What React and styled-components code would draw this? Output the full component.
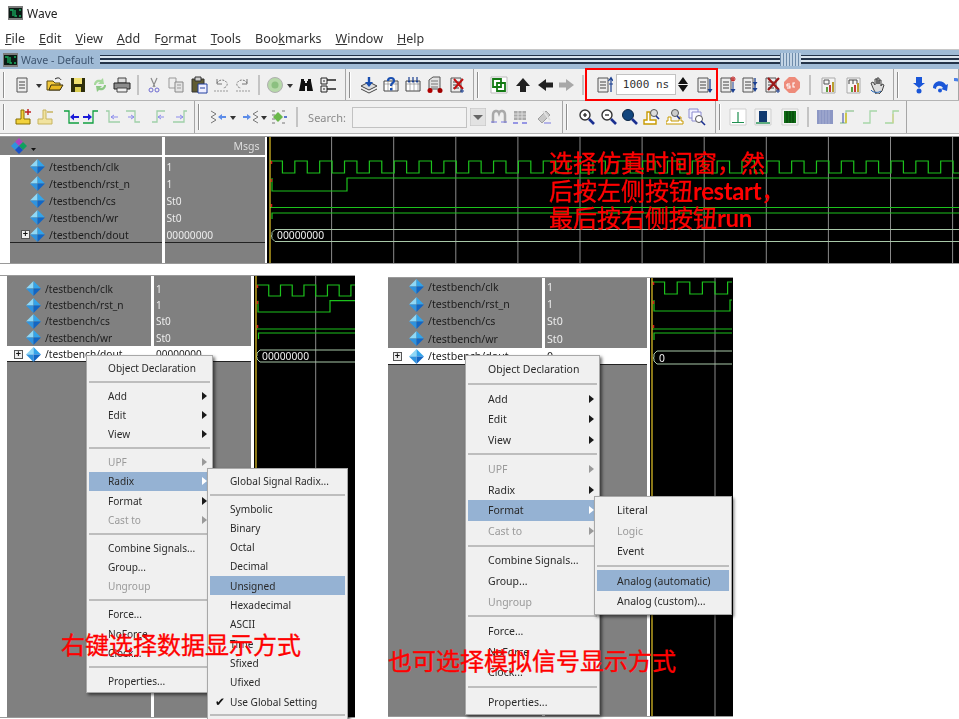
import React from 'react';
import styled, { createGlobalStyle } from 'styled-components';

const Global = createGlobalStyle`
  html, body { margin: 0; padding: 0; background: #fff; }
  * { box-sizing: border-box; }
`;

const uiFont = `"Noto Sans", "Open Sans", sans-serif`;

const Page = styled.div`
  position: relative;
  width: 959px;
  height: 719px;
  overflow: hidden;
  background: #fff;
  font-family: ${uiFont};
  color: #222;
`;
const Soft = styled.div`
  filter: blur(0.35px);
`;
const TitleBar = styled.div`
  height: 26px;
  padding-left: 8px;
  display: flex;
  align-items: center;
  gap: 4px;
  font-size: 12px;
`;
const MenuBar = styled.div`
  height: 23px;
  padding: 1px 0 0 5px;
  display: flex;
  align-items: center;
  gap: 14px;
  font-size: 12.5px;
  color: #333;
  u { text-underline-offset: 1px; }
`;
const WaveWindow = styled.div`
  position: relative;
`;
const DockHeader = styled.div`
  height: 20px;
  display: flex;
  align-items: center;
  padding-left: 3px;
  gap: 3px;
  background: #a0bbd6;
  border-top: 1px solid #c8c8c8;
  font-size: 10.7px;
  color: #3e5570;
`;
const DockLines = styled.div`
  position: relative;
  flex: 1;
  height: 9px;
  margin-left: 3px;
  background: repeating-linear-gradient(to bottom, #24344a 0 1px, #dbe6f0 1px 3px, #24344a 3px 4px);
`;
const DockGrip = styled.div`
  position: absolute;
  left: 680px;
  top: -2px;
  width: 21px;
  height: 13px;
  background: repeating-linear-gradient(to right, #6f8cab 0 1px, #c4d5e6 1px 3px);
`;
const ToolRow = styled.div`
  display: flex;
  height: ${p => p.$h}px;
  background: #f0f0f0;
  border-bottom: 1px solid #b4b4b4;
`;
const ToolGroup = styled.div`
  display: flex;
  flex: 0 0 ${p => p.$w}px;
  align-items: center;
  overflow: hidden;
  border-right: 1px solid #a6a6a6;
  font-size: 11px;
`;
const Grip = styled.i`
  flex: 0 0 2px;
  height: 26px;
  margin-left: 3px;
  border-left: 1px solid #8e8e8e;
  border-right: 1px solid #fff;
`;
const Tool = styled.span`
  flex: 0 0 ${p => p.$w}px;
  min-width: 0;
  margin-left: ${p => p.$gap}px;
  display: flex;
  justify-content: center;
  align-items: center;
  svg { flex: none; display: block; }
`;
const Divider = styled.i`
  display: block;
  width: 2px;
  height: 20px;
  background: #c4c4c4;
`;
const Field = styled.div`
  width: 100%;
  height: 21px;
  background: ${p => (p.$dim ? '#f2f2f2' : '#fff')};
  border: 1px solid #c2c2c2;
`;
const TimeField = styled(Field)`
  display: flex;
  align-items: center;
  justify-content: center;
  font: 11px "DejaVu Sans Mono", "Liberation Mono", monospace;
  color: #333;
  white-space: pre;
`;
const Spin = styled.div`
  display: flex;
  flex-direction: column;
  gap: 1px;
  align-items: center;
`;
const SearchLabel = styled.span`
  color: #8a8a8a;
  font-size: 11px;
`;
const Marker = styled.div`
  position: absolute;
  left: 585px;
  top: 19px;
  width: 133px;
  height: 33px;
  border: 2px solid #f00;
`;
const Gap = styled.div`
  height: 2px;
  background: #fff;
`;
const Panes = styled.div`
  display: grid;
  grid-template-columns: ${p => p.$cols};
  column-gap: ${p => p.$gap}px;
  width: 100%;
  border-top: 1px solid #9a9a9a;
  border-bottom: 1px solid #9a9a9a;
  background: #fff;
`;
const HeaderCell = styled.div`
  height: 18px;
  background: #808080;
  margin-bottom: 2px;
  display: flex;
  align-items: center;
  justify-content: flex-end;
  padding-right: 5px;
  font-size: 10.5px;
  color: #dcdcdc;
`;
const HeaderIconCell = styled(HeaderCell)`
  justify-content: flex-start;
  padding-left: 11px;
  gap: 3px;
`;
const Col = styled.div`
  display: flex;
  flex-direction: column;
  height: ${p => p.$h}px;
`;
const Body = styled.div`
  flex: 1;
  background: #808080;
  margin-left: ${p => p.$inset || 0}px;
  padding-top: ${p => p.$top}px;
`;
const SigRow = styled.div`
  position: relative;
  height: ${p => p.$h}px;
  display: flex;
  align-items: center;
  gap: 4px;
  padding-left: ${p => p.$pad}px;
  font-size: ${p => p.$fs}px;
  white-space: nowrap;
  color: ${p => (p.$value && !p.$sel ? '#ececec' : '#1c1c1c')};
  background: ${p => (p.$sel ? '#fff' : 'transparent')};
  box-shadow: ${p => (p.$rule ? 'inset 0 -1px 0 #222' : 'none')};
`;
const Plus = styled.span`
  position: absolute;
  left: ${p => p.$x}px;
  top: 50%;
  width: 9px;
  height: 9px;
  margin-top: -4.5px;
  border: 1px solid #555;
  background: #eee;
  font: bold 9px/7px "Liberation Sans", sans-serif;
  text-align: center;
  color: #111;
`;
const WaveBox = styled.div`
  background: #000;
  height: 100%;
  overflow: hidden;
  svg { display: block; }
`;
const Shots = styled.div`
  display: flex;
  align-items: flex-start;
  padding-top: 11px;
`;
const Shot = styled.div`
  position: relative;
  flex: 0 0 ${p => p.$w}px;
  height: ${p => p.$h}px;
  margin-left: ${p => p.$ml || 0}px;
  margin-top: ${p => p.$mt || 0}px;
`;
const Menu = styled.div`
  position: absolute;
  left: ${p => p.$x}px;
  top: ${p => p.$y}px;
  width: ${p => p.$w}px;
  padding: ${p => p.$pad}px 2px 2px;
  background: #f0f0f0;
  border: 1px solid #a8a8a8;
  box-shadow: 2px 2px 3px rgba(0, 0, 0, 0.55);
  font-size: ${p => p.$fs}px;
`;
const Item = styled.div`
  position: relative;
  height: ${p => p.$h}px;
  display: flex;
  align-items: center;
  padding-left: ${p => p.$pad}px;
  white-space: nowrap;
  color: ${p => (p.$off ? '#9a9a9a' : '#2a2a2a')};
  background: ${p => (p.$hot ? '#95b2d3' : 'transparent')};
`;
const Arrow = styled.i`
  position: absolute;
  right: 3px;
  top: 50%;
  margin-top: -4px;
  border-left: 5px solid ${p => (p.$off ? '#9a9a9a' : p.$hot ? '#fff' : '#1a1a1a')};
  border-top: 4px solid transparent;
  border-bottom: 4px solid transparent;
`;
const Check = styled.span`
  position: absolute;
  left: 5px;
  font-size: 12px;
  color: #111;
`;
const MenuSep = styled.div`
  height: ${p => p.$h}px;
  display: flex;
  align-items: center;
  &::after {
    content: '';
    flex: 1;
    height: 2px;
    background: #bdbdbd;
  }
`;
const Note = styled.div`
  position: absolute;
  left: ${p => p.$x}px;
  top: ${p => p.$y}px;
  font: 400 24px/27.5px Lato, "Noto Sans CJK SC", sans-serif;
  color: #f00;
  white-space: nowrap;
  -webkit-text-stroke: 0.35px #f00;
  b { font-weight: 700; letter-spacing: -0.4px; -webkit-text-stroke: 0; }
`;

/* ---------- drawn icons ---------- */
const S = ({ children, size = 18, vb = 18 }) => (
  <svg width={size} height={size} viewBox={`0 0 ${vb} ${vb}`} fill="none">{children}</svg>
);
const doc = (
  <path d="M3 2h10v14H3z" fill="#ececec" stroke="#555" />
);
const textLines = <path d="M5 6h6M5 9h6M5 12h6" stroke="#444" />;
const gridBox = <><path d="M2 5h14v10H2z" fill="#fff" stroke="#444" /><path d="M2 8h14M6 5v10M10 5v10M14 5v10" stroke="#7c7c7c" strokeWidth=".6" /></>;
const stepLine = (d, c) => <path d={d} stroke={c} strokeWidth="1.3" fill="none" />;
const icons = {
  page: <>{doc}{textLines}</>,
  open: <><path d="M1 14V5h6l2 2h5v7z" fill="#f2c93c" stroke="#5a4a10" /><path d="M3 14l2-5h12l-3 5z" fill="#e8b820" stroke="#3a3010" /><path d="M9 3c3-2 5-1 6 1" stroke="#222" /></>,
  save: <><path d="M2 2h14v14H2z" fill="#2e2e0c" /><path d="M5 2h8v6H5z" fill="#f0e070" /><path d="M6 11h6v5H6z" fill="#d8cc50" /></>,
  refresh: <><path d="M3 9c0-4 3-6 7-5l2-2 1 6-6 0 2-2c-2-.5-4 1-4 3z" fill="#a6d89c" /><path d="M15 9c0 4-3 6-7 5l-2 2-1-6 6 0-2 2c2 .5 4-1 4-3z" fill="#8cc884" /></>,
  print: <><path d="M5 2h8v5H5z" fill="#ddd" stroke="#444" /><path d="M1 7h16v6H1z" fill="#8c8c8c" stroke="#222" /><path d="M4 12h10v4H4z" fill="#eee" stroke="#444" /></>,
  cut: <><path d="M6 2l4 9M12 2L8 11" stroke="#8b8b8b" strokeWidth="1.2" /><circle cx="6" cy="14" r="2" stroke="#6d6ad0" /><circle cx="12" cy="14" r="2" stroke="#6d6ad0" /></>,
  copy: <><path d="M2 2h7v10H2z" fill="#eee" stroke="#999" /><path d="M8 6h8v10H8z" fill="#e4e4e4" stroke="#888" /><path d="M10 9h4M10 12h4" stroke="#999" /></>,
  paste: <><path d="M2 3h12v13H2z" fill="#5f5b33" stroke="#333" /><path d="M5 1h6v4H5z" fill="#ccc" stroke="#333" /><path d="M8 8h9v9H8z" fill="#eef" stroke="#2340a0" /><path d="M10 12h5" stroke="#2340a0" /></>,
  undo: <><path d="M5 7c2-4 8-4 10 0 1 3-2 5-4 5" stroke="#777" strokeDasharray="2 1.2" /><path d="M5 3v5h5" stroke="#777" /><path d="M2 15h14" stroke="#999" strokeDasharray="2 1" /></>,
  redo: <><path d="M13 7c-2-4-8-4-10 0-1 3 2 5 4 5" stroke="#777" strokeDasharray="2 1.2" /><path d="M13 3v5H8" stroke="#777" /><path d="M2 15h14" stroke="#999" strokeDasharray="2 1" /></>,
  badge: <><circle cx="9" cy="9" r="7.5" fill="#b5d8a8" stroke="#b0b0b0" /><circle cx="9" cy="9" r="3.5" fill="#8cc080" /></>,
  drop: <path d="M6 8h6l-3 4z" fill="#333" />,
  binoc: <><path d="M2 15l2-10h4v10zM16 15l-2-10h-4v10z" fill="#111" /><path d="M4 3h3v3H4zM11 3h3v3h-3zM8 7h2v3H8z" fill="#111" /></>,
  tree: <><path d="M2 2h6v6H2zM2 10h6v6H2z" fill="#eee" stroke="#222" /><path d="M8 4h9M8 13h9" stroke="#222" strokeWidth="1.4" /><path d="M4 5h2M4 13h2" stroke="#222" /></>,
  stack: <><path d="M1 10l8-4 8 4-8 4z" fill="#ddd" stroke="#444" /><path d="M1 13l8 4 8-4" stroke="#444" /><path d="M9 1v7" stroke="#1a4fb0" strokeWidth="2.4" /><path d="M5 6h8l-4 5z" fill="#1a4fb0" /></>,
  helpGrid: <>{gridBox}<path d="M6 5c0-4 6-4 6 0 0 2-3 2-3 5" stroke="#1a4fb0" strokeWidth="2.2" /><path d="M8 12h2.4v2.4H8z" fill="#1a4fb0" /></>,
  arrowsGrid: <>{gridBox}<path d="M5 1v5M9 1v5M13 1v5" stroke="#1a3f90" strokeWidth="1.2" /><path d="M3.5 5h3L5 7zM7.500 5h3L9 7zM11.500 5h3L13 7z" fill="#1a3f90" /></>,
  cart: <><path d="M3 13V4l4-3h7v12z" fill="#e2e2e2" stroke="#555" /><path d="M5 5h7M5 8h7M5 11h7" stroke="#777" /><circle cx="4" cy="14.500" r="2.500" fill="#b00000" /><circle cx="14" cy="14.500" r="2.500" fill="#a00000" /></>,
  xDoc: <>{doc}{textLines}<path d="M6 3l9 10M15 3L6 13" stroke="#c01010" strokeWidth="2" /><path d="M14 13v4M12 15h4" stroke="#1a3f90" /></>,
  newWin: <><path d="M1 1h16v16H1z" fill="#fff" stroke="#bbb" /><path d="M3 3h8v8H3zM7 7h8v8H7z" stroke="#137a13" strokeWidth="1.8" /></>,
  up: <path d="M9 2l7 8h-4v6H6v-6H2z" fill="#222" />,
  left: <path d="M2 9l8-6v3.500h7v5h-7V15z" fill="#222" />,
  right: <path d="M16 9l-8-6v3.500H1v5h7V15z" fill="#a8a8a8" />,
  restart: <>{doc}{textLines}<path d="M16 2v14M13.500 5L16 1.500 18 5" stroke="#1a3f90" strokeWidth="1.2" /><path d="M14 8h4" stroke="#1a3f90" /></>,
  run: <>{doc}{textLines}<path d="M15 3v13" stroke="#1a3f90" strokeWidth="1.3" /><path d="M12.500 13h5L15 17z" fill="#1a3f90" /></>,
  contRun: <>{doc}{textLines}<path d="M15 2v3" stroke="#c02020" strokeWidth="1.6" /><circle cx="15" cy="3" r="2" stroke="#c02020" /><path d="M15 6v9" stroke="#1a3f90" /><path d="M12.500 13h5L15 17z" fill="#1a3f90" /></>,
  runAll: <>{doc}{textLines}<path d="M15 2v11" stroke="#1a3f90" strokeWidth="1.3" /><path d="M12.500 6h5L15 9.500zM12.500 12h5L15 16z" fill="#1a3f90" /></>,
  breakRun: <>{doc}{textLines}<path d="M5 2l11 12M16 2L5 14" stroke="#9c1818" strokeWidth="2.2" /><path d="M15 13v4" stroke="#1a3f90" /><path d="M13 15h4" stroke="#1a3f90" /></>,
  stop: <><path d="M6 1h6l5 5v6l-5 5H6l-5-5V6z" fill="#ee8b7a" /><path d="M4 8h3M4 8v2h3v2H4M12 7h-2v4h2" stroke="#fff" strokeWidth="1.100" /></>,
  chartA: <><path d="M2 2h13v15H2z" fill="#f4f4f4" stroke="#aaa" /><path d="M4 4h5v4H4z" stroke="#555" /><path d="M9 9h2v7H9z" fill="#c83a3a" /><path d="M12 6h2v10h-2z" fill="#b8a030" /><path d="M6 11h2v5H6z" fill="#5f9f3f" /></>,
  chartB: <><path d="M2 2h13v15H2z" fill="#f4f4f4" stroke="#aaa" /><path d="M4 4h8M4 4v4M8 4v4M12 4v4" stroke="#444" /><path d="M6 11h2v5H6z" fill="#5f9f3f" /><path d="M9 9h2v7H9z" fill="#c83a3a" /><path d="M12 7h2v9h-2z" fill="#b8a030" /></>,
  hand: <><path d="M5 12L3 7l2-1 2 3V3h2v5V2h2v6-4h2v6l1-2 2 1-2 6-3 3H8z" fill="#ddd" stroke="#444" /><path d="M3 14c2 3 8 3 10 1" stroke="#2060b0" /></>,
  downBlue: <><path d="M6 1h6v6h3l-6 5-6-5h3z" fill="#1a56d8" /><circle cx="9" cy="15" r="2.500" fill="#1a56d8" /></>,
  overBlue: <><path d="M2 12c0-8 10-9 13-3l2-1-1 7-6-2 2-1c-2-3-7-3-7 1z" fill="#1a56d8" /><circle cx="9" cy="14.500" r="2" fill="#1a56d8" /></>,
  intoBlue: <path d="M3 2c6 0 9 2 9 6h3l-4 5-4-5h2c0-2-2-3-6-3z" fill="#4a80e8" />,
  curAdd: <><path d="M7 2h3v9h6v5H2v-5h5z" fill="#f2d23c" stroke="#8a7000" /><path d="M11 4h6M14 1v6" stroke="#c02020" strokeWidth="1.500" /></>,
  curDel: <><path d="M7 2h3v9h6v5H2v-5h5z" fill="#f1e3a0" stroke="#c8b560" /><path d="M11 4h6" stroke="#c8b560" strokeWidth="1.500" /></>,
  stepL: <>{stepLine('M1 3h5v12h10', '#10a040')}<path d="M7 9l4-3.500v2.500h5v2h-5v2.500z" fill="#1a1ad8" /></>,
  stepR: <>{stepLine('M2 15h10V3h5', '#10a040')}<path d="M11 9L7 5.500v2.500H2v2h5v2.500z" fill="#1a1ad8" /></>,
  palA: <>{stepLine('M2 3h3v11h11', '#9fd0a8')}<path d="M7 9h7M7 9l3-2M7 9l3 2" stroke="#8c8cec" /></>,
  palB: <>{stepLine('M2 3h9v11h5', '#9fd0a8')}<path d="M4 9h6M10 9L7 7M10 9l-3 2" stroke="#8c8cec" /></>,
  palC: <>{stepLine('M15 3H7v11H2', '#9fd0a8')}<path d="M8 9h6M8 9l3-2M8 9l3 2" stroke="#8c8cec" /></>,
  palD: <>{stepLine('M16 3h-3v11H2', '#9fd0a8')}<path d="M5 9h7M12 9L9 7M12 9l-3 2" stroke="#8c8cec" /></>,
  mergeL: <><path d="M2 3l5 3-5 3 5 3-5 3" stroke="#777" /><path d="M9 9l4-3v2h4v2h-4v2z" fill="#5c8ce8" /></>,
  mergeR: <><path d="M16 3l-5 3 5 3-5 3 5 3" stroke="#777" /><path d="M9 9L5 6v2H1v2h4v2z" fill="#5c8ce8" /></>,
  bus: <><path d="M2 3h3M2 7h3M2 11h3M2 15h3M12 3h3M12 15h3" stroke="#777" /><path d="M8 4l5 5-5 5-5-5z" fill="#6ab84a" /><path d="M14 9h3" stroke="#2a50c0" strokeWidth="1.500" /></>,
  fadeA: <><path d="M3 15V7c0-5 5-5 6-2 1-3 6-3 6 2v8" stroke="#a9a9a9" strokeWidth="2.500" /><path d="M1 14h6M11 14h6" stroke="#7878e0" /></>,
  fadeB: <><path d="M3 3h12v9H3z" fill="#aaa" /><path d="M3 6h12M3 9h12M7 3v9M11 3v9" stroke="#ddd" /><path d="M2 15h5M11 15h5" stroke="#7878e0" strokeWidth="1.500" /></>,
  fadeC: <><path d="M3 11L11 3l4 4-8 8z" fill="#c8c8c8" stroke="#a0a0a0" /><path d="M8 3l7 9" stroke="#e0e0e0" strokeWidth="2" /><path d="M9 15h7" stroke="#7878e0" /></>,
  zoomIn: <><circle cx="7" cy="7" r="5" fill="#fff" stroke="#333" strokeWidth="1.400" /><path d="M5 7h4M7 5v4" stroke="#111" strokeWidth="1.200" /><path d="M11 11l5 5" stroke="#1a2f90" strokeWidth="2.600" /></>,
  zoomOut: <><circle cx="7" cy="7" r="5" fill="#fff" stroke="#333" strokeWidth="1.400" /><path d="M5 7h4" stroke="#111" strokeWidth="1.200" /><path d="M11 11l5 5" stroke="#1a2f90" strokeWidth="2.600" /></>,
  zoomFull: <><circle cx="7" cy="7" r="5.500" fill="#12467e" stroke="#0a2240" /><path d="M11 11l5 5" stroke="#1a2f90" strokeWidth="2.600" /></>,
  zoomCur: <><path d="M4 4v8H1v4h12v-4H7V4z" fill="#fff" stroke="#c89a00" strokeWidth="1.400" /><circle cx="11" cy="5" r="3.500" fill="#ddd" stroke="#555" /><path d="M13 8l3 3" stroke="#1a2f90" strokeWidth="1.600" /></>,
  zoomTwo: <><path d="M2 9v4H0v3h17v-3h-2V9h-2v4H5V9z" fill="#fff" stroke="#c89a00" /><circle cx="9" cy="5" r="3.500" fill="#ccc" stroke="#555" /><path d="M11 8l3 3" stroke="#1a2f90" strokeWidth="1.600" /></>,
  zoomDocs: <><path d="M1 1h9v9H1z" fill="#f2f2ff" stroke="#8a8ad0" /><path d="M4 4h9v9H4z" fill="#fafaff" stroke="#8a8ad0" /><circle cx="11" cy="11" r="3.500" fill="#fff" stroke="#555" /><path d="M13 13l4 4" stroke="#1a2f90" strokeWidth="1.600" /></>,
  waveOne: <><path d="M1 1h16v16H1z" fill="#fff" stroke="#cfcfcf" /><path d="M9 4v10M3 14.500h12" stroke="#1f9050" strokeWidth="1.200" /></>,
  waveDark: <><path d="M1 1h16v16H1z" fill="#f4f4f4" stroke="#cfcfcf" /><path d="M5 3h8v11H5z" fill="#123a70" /><path d="M2 15h14" stroke="#1f9050" strokeWidth="1.400" /></>,
  waveGreen: <><path d="M1 1h16v16H1z" fill="#f4f4f4" stroke="#cfcfcf" /><path d="M3 3h12v12H3z" fill="#0e6a14" /><path d="M6 3v12M9 3v12M12 3v12" stroke="#053a08" /></>,
  hatch: <><path d="M1 2h16v14H1z" fill="#8c97c4" /><path d="M4 2v14M7 2v14M10 2v14M13 2v14" stroke="#a9b1d4" /></>,
  stepY: <>{stepLine('M2 15h6V3h8', '#9fcaa0')}<path d="M8 5v10" stroke="#d4c430" strokeWidth="1.600" /><path d="M5 5v10" stroke="#5060b0" strokeWidth="1.200" /></>,
  stepG: <>{stepLine('M2 15h7V3h7', '#a6d6a8')}</>,
  stepK: <>{stepLine('M2 15h8V3h6', '#a6d6a0')}<path d="M10 6v9" stroke="#d8d080" /></>,
};

const Diamond = ({ size = 15 }) => (
  <svg width={size} height={size} viewBox="0 0 16 16" style={{ flex: 'none' }}>
    <polygon points="8,0 8,8 0,8" fill="#8fd8f6" />
    <polygon points="8,0 16,8 8,8" fill="#33a4ea" />
    <polygon points="0,8 8,8 8,16" fill="#2f93de" />
    <polygon points="8,8 16,8 8,16" fill="#1266c4" />
  </svg>
);
const AppGlyph = ({ w = 15, h = 14 }) => (
  <svg width={w} height={h} viewBox="0 0 15 14" style={{ flex: 'none' }}>
    <rect width="15" height="14" fill="#7c7c7c" />
    <rect x="1" y="2" width="13" height="10" fill="#0a1a14" />
    <path d="M2 4h3v6M7 4v6h2M11 4h2M11 10h2" stroke="#18b060" strokeWidth="1.300" fill="none" />
  </svg>
);
const GroupGlyph = () => (
  <>
    <svg width="17" height="16" viewBox="0 0 17 16" style={{ flex: 'none' }}>
      <polygon points="8,0 12,4 8,8 4,4" fill="#b040c0" />
      <polygon points="4,4 8,8 4,12 0,8" fill="#2f93de" />
      <polygon points="12,4 16,8 12,12 8,8" fill="#10a060" />
      <polygon points="8,8 12,12 8,16 4,12" fill="#1a50c8" />
    </svg>
    <svg width="5" height="3" viewBox="0 0 5 3" style={{ marginTop: 6 }}><path d="M0 0h5L2.500 3z" fill="#111" /></svg>
  </>
);

const custom = {
  sep: () => <Divider />,
  time: () => <TimeField>1000 ns</TimeField>,
  spin: () => (
    <Spin>
      <svg width="10" height="7"><path d="M5 0l5 7H0z" fill="#111" /></svg>
      <svg width="10" height="7"><path d="M5 7l5-7H0z" fill="#111" /></svg>
    </Spin>
  ),
  searchLabel: () => <SearchLabel>Search:</SearchLabel>,
  searchField: () => <Field $dim />,
  searchDrop: () => (
    <svg width="16" height="18"><rect width="16" height="18" fill="#e2e2e2" stroke="#c0c0c0" /><path d="M3 7h10l-5 5z" fill="#666" /></svg>
  ),
};
const widthOf = { sep: 2, drop: 8, time: 60, spin: 12, searchLabel: 40, searchField: 115, searchDrop: 16 };

const Tools = ({ start, items }) => {
  let x = start;
  return items.map(([name, cx], i) => {
    const w = widthOf[name] || 18;
    const gap = cx - w / 2 - x;
    x = cx + w / 2;
    const Custom = custom[name];
    return (
      <Tool key={i} $w={w} $gap={gap}>
        {Custom ? <Custom /> : <S>{icons[name]}</S>}
      </Tool>
    );
  });
};

const Bar = ({ groups, h }) => {
  let x = 0;
  return (
    <ToolRow $h={h}>
      {groups.map((g, i) => {
        const start = x + 5;
        x += g.w;
        return (
          <ToolGroup key={i} $w={g.w}>
            <Grip />
            <Tools start={start} items={g.items} />
          </ToolGroup>
        );
      })}
    </ToolRow>
  );
};

const row1 = [
  { w: 346, items: [['page', 23], ['drop', 39], ['open', 55], ['save', 78], ['refresh', 100], ['print', 122], ['sep', 138], ['cut', 154], ['copy', 176], ['paste', 199], ['undo', 221], ['redo', 243], ['sep', 259], ['badge', 275], ['drop', 290], ['binoc', 306], ['tree', 328]] },
  { w: 128, items: [['stack', 369], ['helpGrid', 391], ['arrowsGrid', 413], ['cart', 435], ['xDoc', 457]] },
  { w: 420, items: [['newWin', 499], ['up', 523], ['left', 545], ['right', 567], ['sep', 583], ['restart', 604], ['time', 646], ['spin', 683], ['run', 704], ['contRun', 727], ['runAll', 749], ['breakRun', 772], ['stop', 792], ['sep', 810], ['chartA', 829], ['chartB', 854], ['hand', 877]] },
  { w: 65, items: [['downBlue', 919], ['overBlue', 940], ['intoBlue', 960]] },
];
const row2 = [
  { w: 195, items: [['curAdd', 23], ['curDel', 45], ['stepL', 72], ['stepR', 90], ['palA', 113], ['palB', 133], ['palC', 159], ['palD', 180]] },
  { w: 368, items: [['mergeL', 218], ['drop', 233], ['mergeR', 251], ['drop', 264], ['bus', 279], ['sep', 297], ['searchLabel', 327], ['searchField', 409], ['searchDrop', 478], ['fadeA', 499], ['fadeB', 520], ['fadeC', 544]] },
  { w: 153, items: [['zoomIn', 587], ['zoomOut', 609], ['zoomFull', 630], ['zoomCur', 652], ['zoomTwo', 675], ['zoomDocs', 697]] },
  { w: 191, items: [['waveOne', 738], ['waveDark', 763], ['waveGreen', 790], ['sep', 808], ['hatch', 825], ['stepY', 847], ['stepG', 870], ['stepK', 892]] },
];

/* ---------- waves ---------- */
const GREEN = '#1cc21c';
const clockPath = (x0, high, low, half, end) => {
  let d = `M${x0} ${high}`;
  let x = x0;
  let up = true;
  while (x < end) {
    x += half;
    d += `H${x} V${up ? low : high}`;
    up = !up;
  }
  return d;
};

const WaveSvg = ({ x, y, w, h, cursor, grid, clk, rst, cs, wr, bus, label, labelX, ticks }) => (
  <svg width={w} height={h} viewBox={`${x} ${y} ${w} ${h}`} fill="none">
    {grid.map(g => <path key={g} d={`M${g} ${y}V${y + h}`} stroke="#8a8a8a" />)}
    <path d={clockPath(clk.x, clk.hi, clk.lo, clk.half, x + w)} stroke={GREEN} strokeWidth="1.200" />
    <path d={`M${rst.x} ${rst.hi}V${rst.lo}H${rst.rise}V${rst.hi}H${x + w}`} stroke={GREEN} strokeWidth="1.200" />
    <path d={`M${cursor} ${cs}H${x + w}`} stroke={GREEN} strokeWidth="1.200" />
    <path d={`M${wr.x} ${wr.lo}V${wr.hi}H${x + w}`} stroke={GREEN} strokeWidth="1.200" />
    <path d={`M${x + w} ${bus.a}H${labelX - 2}l-3 3v${(bus.b - bus.a - 6) / 2}l-1 .5 1 .5v${(bus.b - bus.a - 6) / 2 - 1}l3 3H${x + w}`} stroke="#a8c8a8" strokeWidth="1" />
    <text x={labelX} y={bus.b - 2.5} fontFamily={uiFont} fontSize="10.3" fill="#f0f0f0">{label}</text>
    {ticks.map(t => <path key={t} d={`M${cursor + 1.500} ${t}v3`} stroke="#d01818" strokeWidth="1.500" />)}
    <path d={`M${cursor} ${y}V${y + h}`} stroke="#e8c828" strokeWidth="1.200" />
  </svg>
);

const signals = [
  ['/testbench/clk', '1'],
  ['/testbench/rst_n', '1'],
  ['/testbench/cs', 'St0'],
  ['/testbench/wr', 'St0'],
  ['/testbench/dout', '00000000'],
];

const SignalRows = ({ h, pad, fs, plus, selected, rows = signals }) =>
  rows.map(([n], i) => {
    const last = i === rows.length - 1;
    return (
      <SigRow key={n} $h={h} $pad={pad} $fs={fs} $sel={selected && last} $rule={last}>
        {last && <Plus $x={plus}>+</Plus>}
        <Diamond />
        <span>{n}</span>
      </SigRow>
    );
  });

const ValueRows = ({ h, pad, fs, selected, rows = signals }) =>
  rows.map(([n, v], i) => {
    const last = i === rows.length - 1;
    return (
      <SigRow key={n} $value $h={h} $pad={pad} $fs={fs} $sel={selected && last} $rule={last}>
        <span>{v}</span>
      </SigRow>
    );
  });

const ContextMenu = ({ x, y, w, pad, fs, h, sep, textPad, entries }) => (
  <Menu $x={x} $y={y} $w={w} $pad={pad} $fs={fs}>
    {entries.map((e, i) =>
      e === '-' ? (
        <MenuSep key={i} $h={sep} />
      ) : (
        <Item key={i} $h={h} $pad={textPad} $off={e.off} $hot={e.hot}>
          {e.check && <Check>✔</Check>}
          {e.t}
          {e.more && <Arrow $off={e.off} $hot={e.hot} />}
        </Item>
      )
    )}
  </Menu>
);

const mainEntries = hot => [
  { t: 'Object Declaration' }, '-',
  { t: 'Add', more: 1 }, { t: 'Edit', more: 1 }, { t: 'View', more: 1 }, '-',
  { t: 'UPF', more: 1, off: 1 },
  { t: 'Radix', more: 1, hot: hot === 'Radix' },
  { t: 'Format', more: 1, hot: hot === 'Format' },
  { t: 'Cast to', more: 1, off: 1 }, '-',
  { t: 'Combine Signals...' }, { t: 'Group...' }, { t: 'Ungroup', off: 1 }, '-',
  { t: 'Force...' }, { t: 'NoForce' }, { t: 'Clock...' }, '-',
  { t: 'Properties...' },
];
const radixEntries = [
  { t: 'Global Signal Radix...' }, '-',
  { t: 'Symbolic' }, { t: 'Binary' }, { t: 'Octal' }, { t: 'Decimal' },
  { t: 'Unsigned', hot: 1 }, { t: 'Hexadecimal' }, { t: 'ASCII' }, { t: 'Time' },
  { t: 'Sfixed' }, { t: 'Ufixed' }, { t: 'Use Global Setting', check: 1 }, '-',
];
const formatEntries = [
  { t: 'Literal' }, { t: 'Logic', off: 1 }, { t: 'Event' }, '-',
  { t: 'Analog (automatic)', hot: 1 }, { t: 'Analog (custom)...' },
];

const TOP_GRID = [0, 1, 2, 3, 4, 5, 6, 7, 8, 9, 10].map(i => 269.5 + 62.1 * (i + 1));

export default function App() {
  return (
    <Page>
      <Global />
      <Soft>
        <TitleBar><AppGlyph /><span>Wave</span></TitleBar>
        <MenuBar>
          <span><u>F</u>ile</span>
          <span><u>E</u>dit</span>
          <span><u>V</u>iew</span>
          <span><u>A</u>dd</span>
          <span>F<u>o</u>rmat</span>
          <span><u>T</u>ools</span>
          <span>Boo<u>k</u>marks</span>
          <span><u>W</u>indow</span>
          <span><u>H</u>elp</span>
        </MenuBar>
        <WaveWindow>
          <DockHeader>
            <AppGlyph />
            <span>Wave - Default</span>
            <DockLines><DockGrip /></DockLines>
          </DockHeader>
          <Bar groups={row1} h={32} />
          <Bar groups={row2} h={33} />
          <Marker />
          <Gap />
          <Panes $cols="162px 100px 1fr" $gap={2.5}>
            <Col $h={126}>
              <HeaderIconCell><GroupGlyph /></HeaderIconCell>
              <Body $inset={10} $top={1}>
                <SignalRows h={17} pad={20} fs={10.500} plus={11} />
              </Body>
            </Col>
            <Col $h={126}>
              <HeaderCell>Msgs</HeaderCell>
              <Body $top={1}>
                <ValueRows h={17} pad={2} fs={10.200} />
              </Body>
            </Col>
            <WaveBox>
              <WaveSvg
                x={267} y={137} w={692} h={126}
                cursor={270}
                grid={TOP_GRID}
                clk={{ x: 270, hi: 161, lo: 173, half: 12.42 }}
                rst={{ x: 272, hi: 178, lo: 191, rise: 347 }}
                cs={207.500}
                wr={{ x: 272, hi: 213, lo: 219 }}
                bus={{ a: 229.500, b: 241.500 }}
                label="00000000"
                labelX={277}
                ticks={[161, 179, 204]}
              />
            </WaveBox>
          </Panes>
        </WaveWindow>
      </Soft>

      <Shots>
        <Shot $w={355} $h={445}>
          <Soft>
            <Panes $cols="151px 97px 1fr" $gap={3}>
              <Col $h={441}>
                <Body $inset={7} $top={4.500}>
                  <SignalRows h={16.400} pad={19} fs={10.200} plus={7} selected />
                </Body>
              </Col>
              <Col $h={441}>
                <Body $top={4.500}>
                  <ValueRows h={16.400} pad={2} fs={10} selected />
                </Body>
              </Col>
              <WaveBox>
                <WaveSvg
                  x={254} y={276} w={101} h={441}
                  cursor={256}
                  grid={[315.700]}
                  clk={{ x: 257, hi: 285, lo: 296, half: 11.740 }}
                  rst={{ x: 258, hi: 300.700, lo: 312, rise: 330 }}
                  cs={329}
                  wr={{ x: 258.500, hi: 333, lo: 339 }}
                  bus={{ a: 350, b: 362 }}
                  label="00000000"
                  labelX={262}
                  ticks={[285, 301, 325]}
                />
              </WaveBox>
            </Panes>
            <ContextMenu x={86} y={80} w={127} pad={2} fs={10.100} h={19.300} sep={8.600} textPad={19} entries={mainEntries('Radix')} />
            <ContextMenu x={207} y={193} w={141} pad={2} fs={10.100} h={19.300} sep={8.600} textPad={20} entries={radixEntries} />
          </Soft>
        </Shot>
        <Shot $w={345} $h={440} $ml={33} $mt={2}>
          <Soft>
            <Panes $cols="154px 102px 1fr" $gap={3}>
              <Col $h={438}>
                <Body $top={0}>
                  <SignalRows h={17.400} pad={21} fs={10.600} plus={5} selected />
                </Body>
              </Col>
              <Col $h={438}>
                <Body $top={0}>
                  <ValueRows h={17.400} pad={2} fs={10.600} selected rows={signals.map(([n, v], i) => [n, i === 4 ? '0' : v])} />
                </Body>
              </Col>
              <WaveBox>
                <WaveSvg
                  x={651} y={278} w={82} h={438}
                  cursor={653}
                  grid={[716]}
                  clk={{ x: 653, hi: 282, lo: 294, half: 12.600 }}
                  rst={{ x: 655, hi: 300, lo: 311, rise: 731 }}
                  cs={329}
                  wr={{ x: 655, hi: 333, lo: 340 }}
                  bus={{ a: 351, b: 364 }}
                  label="0"
                  labelX={660}
                  ticks={[282, 301, 325]}
                />
              </WaveBox>
            </Panes>
            <ContextMenu x={77} y={78} w={135} pad={2.800} fs={10.500} h={20.550} sep={9} textPad={20} entries={mainEntries('Format')} />
            <ContextMenu x={206} y={219} w={138} pad={2.800} fs={10.500} h={20.550} sep={9} textPad={20} entries={formatEntries} />
          </Soft>
        </Shot>
      </Shots>

      <Note $x={549} $y={149}>
        选择仿真时间窗，然<br />
        后按左侧按钮<b>restart</b>，<br />
        最后按右侧按钮<b>run</b>
      </Note>
      <Note $x={61} $y={631}>右键选择数据显示方式</Note>
      <Note $x={388} $y={647}>也可选择模拟信号显示方式</Note>
    </Page>
  );
}
